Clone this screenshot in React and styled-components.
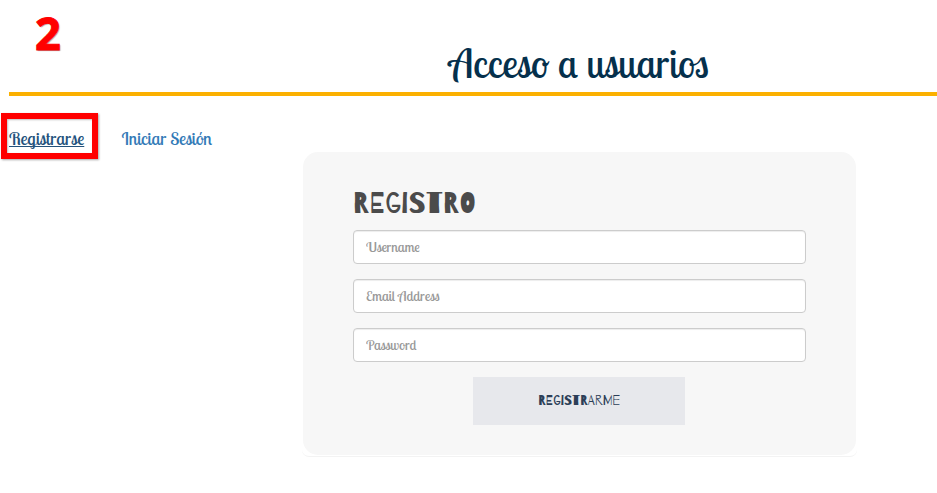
import React from "react";
import styled, { createGlobalStyle, css } from "styled-components";

const script = css`
  font-family: "Lobster Two", "Liberation Serif", serif;
  font-style: normal;
  font-weight: 400;
`;

const display = css`
  font-family: Barrio, Inter, sans-serif;
  font-weight: 400;
`;

const GlobalStyle = createGlobalStyle`
  *, *::before, *::after { box-sizing: border-box; }
  body { margin: 0; background: #fff; overflow: hidden; }
`;

const Page = styled.div`
  width: 937px;
  height: 493px;
  overflow: hidden;
  background: #fff;
`;

const Header = styled.header`
  display: flex;
  align-items: flex-start;
  height: 96px;
  margin-left: 9px;
  border-bottom: 4px solid #fbb000;
`;

const Step = styled.span`
  width: 440px;
  padding: 1px 0 0 26px;
  font: 700 45px/64px "Open Sans", sans-serif;
  color: #f00;
  -webkit-text-stroke: 1px #f00;
  text-shadow: 1px 1px 1px rgba(0, 0, 0, 0.4);
`;

const Title = styled.h1`
  ${script}
  margin: 0;
  padding-top: 38px;
  font-size: 40px;
  line-height: 50px;
  color: #05304c;
  white-space: nowrap;
`;

const Nav = styled.nav`
  display: flex;
  align-items: flex-start;
  height: 56px;
  padding: 17px 0 0 1px;
`;

const NavItem = styled.div`
  width: ${(p) => p.$width}px;
  height: 46px;
  padding: ${(p) => (p.$marked ? "7px 0 0 2px" : "13px 0 0 0")};
  border: ${(p) => (p.$marked ? "6px solid #f00" : "0")};
  box-shadow: ${(p) => (p.$marked ? "1px 1px 2px rgba(0,0,0,.35), inset 1px 1px 2px rgba(0,0,0,.25)" : "none")};
  margin-right: 23.5px;
`;

const NavLink = styled.a`
  ${script}
  display: inline-block;
  font-size: 18px;
  line-height: 25px;
  white-space: nowrap;
  color: ${(p) => (p.$active ? "#23527c" : "#337ab7")};
  text-decoration: ${(p) => (p.$active ? "underline" : "none")};
  text-decoration-thickness: 1px;
  text-underline-offset: 1px;
  text-decoration-skip-ink: none;
`;

const CardFrame = styled.section`
  width: 555px;
  height: 305px;
  margin-left: 302px;
  padding: 0 1px;
  border-bottom: 1px solid #f3f3f3;
  border-radius: 15px 15px 7px 7px;
`;

const Card = styled.form`
  display: flex;
  flex-direction: column;
  height: 303px;
  padding: 34px 50px 30px;
  border-radius: 15px;
  background: #f7f7f7;
`;

const Heading = styled.h2`
  ${display}
  height: 34px;
  margin: 0 0 10px;
  font-size: 30px;
  line-height: 35px;
  color: #4b4b4b;
  text-transform: uppercase;
`;

const Field = styled.input`
  ${script}
  width: 453px;
  height: 34px;
  margin: 0 0 15px;
  padding: 6px 12px;
  font-size: 14px;
  line-height: 20px;
  color: #555;
  background: #fff;
  border: 1px solid #ccc;
  border-radius: 4px;
  box-shadow: inset 0 1px 1px rgba(0, 0, 0, 0.075);
  outline: 0;
  &::placeholder {
    color: #999;
    opacity: 1;
  }
`;

const Submit = styled.button`
  ${display}
  width: 212px;
  height: 48px;
  margin-left: 120px;
  padding: 0;
  border: 0;
  background: #e7e8ec;
  color: #2c3e57;
  font-size: 14px;
  line-height: 20px;
  text-align: center;
  text-transform: uppercase;
`;

export default function App() {
  return (
    <>
      <GlobalStyle />
      <Page>
        <Header>
          <Step>2</Step>
          <Title>Acceso a usuarios</Title>
        </Header>
        <Nav>
          <NavItem $marked $width={97}>
            <NavLink $active>Registrarse</NavLink>
          </NavItem>
          <NavItem $width={100}>
            <NavLink>Iniciar Sesión</NavLink>
          </NavItem>
        </Nav>
        <CardFrame>
          <Card>
            <Heading>Registro</Heading>
            <Field placeholder="Username" />
            <Field placeholder="Email Address" />
            <Field placeholder="Password" />
            <Submit type="button">Registrarme</Submit>
          </Card>
        </CardFrame>
      </Page>
    </>
  );
}
